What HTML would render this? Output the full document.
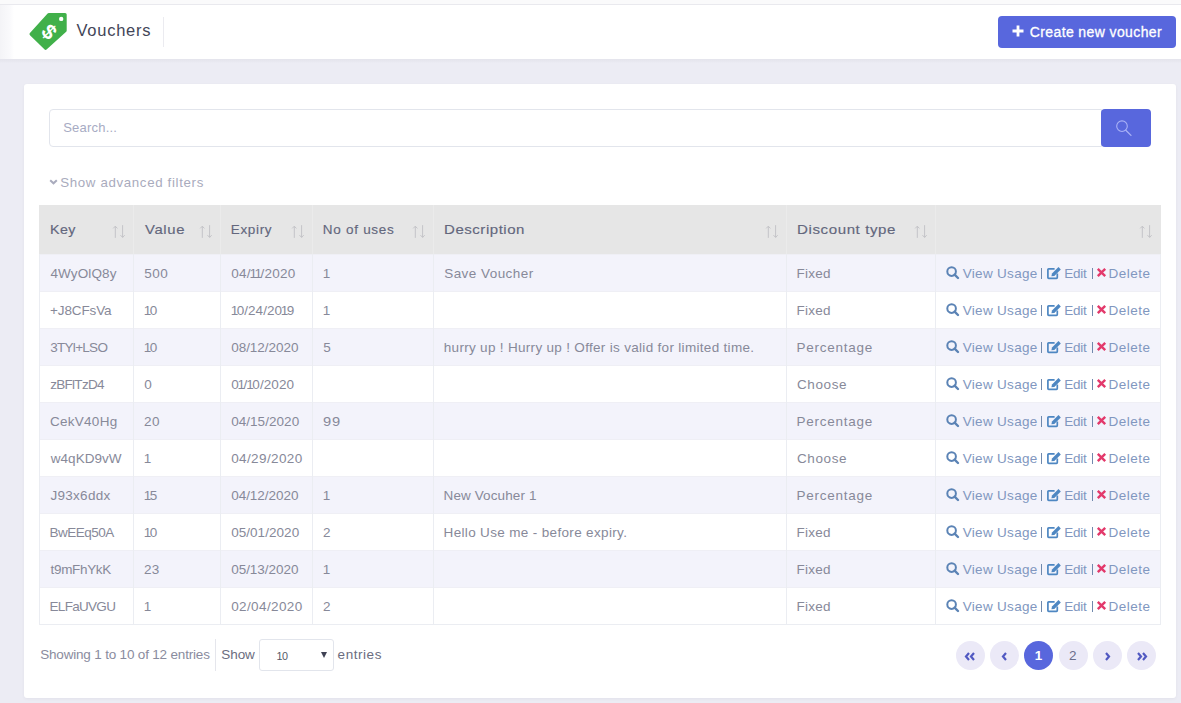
<!DOCTYPE html><html><head><meta charset="utf-8"><style>
*{box-sizing:border-box;margin:0;padding:0}
html,body{width:1181px;height:703px;overflow:hidden}
body{background:#ececf4;font-family:"Liberation Sans",sans-serif;position:relative}
.a{position:absolute}
.t{position:absolute;height:0;line-height:0;white-space:nowrap}
svg{position:absolute;overflow:visible}
</style></head><body>
<div class="a" style="left:0;top:0;width:1181px;height:4px;background:#fafafb"></div>
<div class="a" style="left:0;top:4px;width:1181px;height:1px;background:#e9e9ee"></div>
<div class="a" style="left:0;top:5px;width:1181px;height:54px;background:linear-gradient(90deg,#f4f4f7 0px,#fafafc 10px,#fff 14px)"></div>
<div class="a" style="left:0;top:59px;width:1181px;height:4px;background:linear-gradient(180deg,#e4e4ec 0,#e7e7ef 50%,#ececf4 100%)"></div>
<svg style="left:25px;top:8px" width="48" height="48" viewBox="0 0 48 48">
<polygon points="40.1,6.6 23.8,6.6 6.1,26 20.5,40.2 40.1,22.6" fill="#41b04a" stroke="#41b04a" stroke-width="3.2" stroke-linejoin="round"/>
<circle cx="36.2" cy="10.9" r="2.2" fill="#fff"/>
<text x="0" y="0" transform="translate(24.4,23.6) rotate(45)" font-family="Liberation Sans" font-weight="bold" font-size="21" fill="#fff" text-anchor="middle" dominant-baseline="central">$</text>
</svg>
<div class="t" style="left:76.50px;top:29.98px;font-size:16.5px;color:#434558;font-weight:normal;letter-spacing:0.746px;">Vouchers</div>
<div class="a" style="left:163px;top:17px;width:1px;height:30px;background:#ebebf0"></div>
<div class="a" style="left:998px;top:16px;width:178px;height:32px;background:#5867dd;border-radius:4px"></div>
<svg style="left:1012px;top:25px" width="12" height="12" viewBox="0 0 12 12"><path d="M6 0.5V11.5M0.5 6H11.5" stroke="#fff" stroke-width="2.8"/></svg>
<div class="t" style="left:1029.74px;top:32.05px;font-size:14px;color:#ffffff;font-weight:normal;letter-spacing:0.390px;-webkit-text-stroke:0.3px #fff">Create new voucher</div>
<div class="a" style="left:24px;top:84px;width:1152px;height:614px;background:#fff;border-radius:3px;box-shadow:0 1px 3px rgba(60,60,90,0.06)"></div>
<div class="a" style="left:49px;top:109px;width:1053px;height:38px;border:1px solid #e2e5ec;border-radius:4px 0 0 4px"></div>
<div class="t" style="left:63.19px;top:127.50px;font-size:13px;color:#a7abc3;font-weight:normal;letter-spacing:0.219px;">Search...</div>
<div class="a" style="left:1101px;top:109px;width:50px;height:38px;background:#5867dd;border-radius:4px"></div>
<svg style="left:1100px;top:108px" width="52" height="40" viewBox="1100 108 52 40"><circle cx="1122" cy="126.2" r="5.3" fill="none" stroke="#aab2f6" stroke-width="1.1"/><path d="M1125.8 130.2L1131 135.4" stroke="#aab2f6" stroke-width="1.3" stroke-linecap="round"/></svg>
<svg style="left:49px;top:178.8px" width="9" height="6" viewBox="0 0 9 6"><path d="M1.2 1.2L4.5 4.3L7.8 1.2" fill="none" stroke="#a9abbd" stroke-width="2"/></svg>
<div class="t" style="left:60.18px;top:182.69px;font-size:13.3px;color:#a9abbd;font-weight:normal;letter-spacing:0.651px;">Show advanced filters</div>
<div class="a" style="left:39px;top:205px;width:1122px;height:49px;background:#e6e6e6"></div>
<div class="a" style="left:133px;top:205px;width:1px;height:49px;background:#ebebeb"></div>
<div class="a" style="left:220px;top:205px;width:1px;height:49px;background:#ebebeb"></div>
<div class="a" style="left:312px;top:205px;width:1px;height:49px;background:#ebebeb"></div>
<div class="a" style="left:433px;top:205px;width:1px;height:49px;background:#ebebeb"></div>
<div class="a" style="left:786px;top:205px;width:1px;height:49px;background:#ebebeb"></div>
<div class="a" style="left:935px;top:205px;width:1px;height:49px;background:#ebebeb"></div>
<div class="t" style="left:49.75px;top:230.22px;font-size:13.5px;color:#63677d;font-weight:normal;letter-spacing:0.418px;-webkit-text-stroke:0.15px #63677d;transform:scaleX(1.0565);transform-origin:0 0">Key</div>
<svg style="left:113px;top:223px" width="12" height="17" viewBox="0 0 12 17"><path d="M2.3 3.2V14.9M0.2 5.4L2.3 3.2L4.4 5.4M9.6 2.2V14.4M7.5 12.2L9.6 14.4L11.7 12.2" fill="none" stroke="#c4c4c8" stroke-width="1"/></svg>
<div class="t" style="left:144.80px;top:230.22px;font-size:13.5px;color:#63677d;font-weight:normal;letter-spacing:0.562px;-webkit-text-stroke:0.15px #63677d;transform:scaleX(1.1023);transform-origin:0 0">Value</div>
<svg style="left:200px;top:223px" width="12" height="17" viewBox="0 0 12 17"><path d="M2.3 3.2V14.9M0.2 5.4L2.3 3.2L4.4 5.4M9.6 2.2V14.4M7.5 12.2L9.6 14.4L11.7 12.2" fill="none" stroke="#c4c4c8" stroke-width="1"/></svg>
<div class="t" style="left:230.75px;top:230.22px;font-size:13.5px;color:#63677d;font-weight:normal;letter-spacing:0.669px;-webkit-text-stroke:0.15px #63677d">Expiry</div>
<svg style="left:292px;top:223px" width="12" height="17" viewBox="0 0 12 17"><path d="M2.3 3.2V14.9M0.2 5.4L2.3 3.2L4.4 5.4M9.6 2.2V14.4M7.5 12.2L9.6 14.4L11.7 12.2" fill="none" stroke="#c4c4c8" stroke-width="1"/></svg>
<div class="t" style="left:322.75px;top:230.22px;font-size:13.5px;color:#63677d;font-weight:normal;letter-spacing:0.727px;-webkit-text-stroke:0.15px #63677d">No of uses</div>
<svg style="left:413px;top:223px" width="12" height="17" viewBox="0 0 12 17"><path d="M2.3 3.2V14.9M0.2 5.4L2.3 3.2L4.4 5.4M9.6 2.2V14.4M7.5 12.2L9.6 14.4L11.7 12.2" fill="none" stroke="#c4c4c8" stroke-width="1"/></svg>
<div class="t" style="left:443.75px;top:230.22px;font-size:13.5px;color:#63677d;font-weight:normal;letter-spacing:0.487px;-webkit-text-stroke:0.15px #63677d;transform:scaleX(1.1113);transform-origin:0 0">Description</div>
<svg style="left:766px;top:223px" width="12" height="17" viewBox="0 0 12 17"><path d="M2.3 3.2V14.9M0.2 5.4L2.3 3.2L4.4 5.4M9.6 2.2V14.4M7.5 12.2L9.6 14.4L11.7 12.2" fill="none" stroke="#c4c4c8" stroke-width="1"/></svg>
<div class="t" style="left:796.75px;top:230.22px;font-size:13.5px;color:#63677d;font-weight:normal;letter-spacing:0.524px;-webkit-text-stroke:0.15px #63677d;transform:scaleX(1.1176);transform-origin:0 0">Discount type</div>
<svg style="left:915px;top:223px" width="12" height="17" viewBox="0 0 12 17"><path d="M2.3 3.2V14.9M0.2 5.4L2.3 3.2L4.4 5.4M9.6 2.2V14.4M7.5 12.2L9.6 14.4L11.7 12.2" fill="none" stroke="#c4c4c8" stroke-width="1"/></svg>
<svg style="left:1140px;top:223px" width="12" height="17" viewBox="0 0 12 17"><path d="M2.3 3.2V14.9M0.2 5.4L2.3 3.2L4.4 5.4M9.6 2.2V14.4M7.5 12.2L9.6 14.4L11.7 12.2" fill="none" stroke="#c4c4c8" stroke-width="1"/></svg>
<div class="a" style="left:39px;top:254px;width:1122px;height:37px;background:#f3f3fb;border-top:1px solid #efeff5"></div>
<div class="a" style="left:39px;top:291px;width:1122px;height:37px;background:#ffffff;border-top:1px solid #efeff5"></div>
<div class="a" style="left:39px;top:328px;width:1122px;height:37px;background:#f3f3fb;border-top:1px solid #efeff5"></div>
<div class="a" style="left:39px;top:365px;width:1122px;height:37px;background:#ffffff;border-top:1px solid #efeff5"></div>
<div class="a" style="left:39px;top:402px;width:1122px;height:37px;background:#f3f3fb;border-top:1px solid #efeff5"></div>
<div class="a" style="left:39px;top:439px;width:1122px;height:37px;background:#ffffff;border-top:1px solid #efeff5"></div>
<div class="a" style="left:39px;top:476px;width:1122px;height:37px;background:#f3f3fb;border-top:1px solid #efeff5"></div>
<div class="a" style="left:39px;top:513px;width:1122px;height:37px;background:#ffffff;border-top:1px solid #efeff5"></div>
<div class="a" style="left:39px;top:550px;width:1122px;height:37px;background:#f3f3fb;border-top:1px solid #efeff5"></div>
<div class="a" style="left:39px;top:587px;width:1122px;height:37px;background:#ffffff;border-top:1px solid #efeff5"></div>
<div class="a" style="left:39px;top:254px;width:1px;height:371px;background:#ebedf2"></div>
<div class="a" style="left:133px;top:254px;width:1px;height:371px;background:#ebedf2"></div>
<div class="a" style="left:220px;top:254px;width:1px;height:371px;background:#ebedf2"></div>
<div class="a" style="left:312px;top:254px;width:1px;height:371px;background:#ebedf2"></div>
<div class="a" style="left:433px;top:254px;width:1px;height:371px;background:#ebedf2"></div>
<div class="a" style="left:786px;top:254px;width:1px;height:371px;background:#ebedf2"></div>
<div class="a" style="left:935px;top:254px;width:1px;height:371px;background:#ebedf2"></div>
<div class="a" style="left:1160px;top:254px;width:1px;height:371px;background:#ebedf2"></div>
<div class="a" style="left:39px;top:624px;width:1122px;height:1px;background:#ebedf2"></div>
<div class="t" style="left:50.39px;top:274.22px;font-size:13.5px;color:#878999;font-weight:normal;letter-spacing:0.124px;">4WyOlQ8y</div>
<div class="t" style="left:144.18px;top:274.22px;font-size:13.5px;color:#878999;font-weight:normal;letter-spacing:0.567px;">500</div>
<div class="t" style="left:231.18px;top:274.22px;font-size:13.5px;color:#878999;font-weight:normal;letter-spacing:0.285px;">04/<span style="margin-left:-1.2px;letter-spacing:-1.5px">1</span><span style="margin-left:-1.2px;letter-spacing:-1.5px">1</span>/2020</div>
<div class="t" style="left:322.76px;top:274.22px;font-size:13.5px;color:#878999;font-weight:normal;letter-spacing:0.000px;">1</div>
<div class="t" style="left:444.18px;top:274.22px;font-size:13.5px;color:#878999;font-weight:normal;letter-spacing:0.457px;">Save Voucher</div>
<div class="t" style="left:796.55px;top:274.22px;font-size:13.5px;color:#878999;font-weight:normal;letter-spacing:0.250px;">Fixed</div>
<svg style="left:945.5px;top:266.3px" width="13" height="13" viewBox="0 0 13 13"><circle cx="5.6" cy="5.6" r="4.3" fill="none" stroke="#5b83b5" stroke-width="2"/><path d="M8.6 8.6L12 12" stroke="#5b83b5" stroke-width="2.4" stroke-linecap="round"/></svg>
<div class="t" style="left:962.70px;top:274.22px;font-size:13.5px;color:#8197c0;font-weight:normal;letter-spacing:0.317px;">View Usage</div>
<div class="a" style="left:1041px;top:268px;width:1.2px;height:11px;background:#7089ad"></div>
<svg style="left:1046.5px;top:267.1px" width="14" height="12" viewBox="0 0 14 12"><path d="M7.6 1.9H1.7Q0.9 1.9 0.9 2.7V10.5Q0.9 11.3 1.7 11.3H9.5Q10.3 11.3 10.3 10.5V6.6" fill="none" stroke="#4e87c2" stroke-width="1.7"/><path d="M4.4 9.3L5.0 6.6L11.5 0.1L13.8 2.4L7.3 8.9Z" fill="#4e87c2"/></svg>
<div class="t" style="left:1064.25px;top:274.22px;font-size:13.5px;color:#8197c0;font-weight:normal;letter-spacing:-0.218px;">Edit</div>
<div class="a" style="left:1091.5px;top:268px;width:1.2px;height:11px;background:#7089ad"></div>
<svg style="left:1097px;top:268.2px" width="9" height="9" viewBox="0 0 9 9"><path d="M0.8 0.8L8.2 8.2M8.2 0.8L0.8 8.2" stroke="#e3396b" stroke-width="2.4"/></svg>
<div class="t" style="left:1108.45px;top:274.22px;font-size:13.5px;color:#8197c0;font-weight:normal;letter-spacing:0.516px;">Delete</div>
<div class="t" style="left:49.97px;top:311.22px;font-size:13.5px;color:#878999;font-weight:normal;letter-spacing:-0.107px;">+J8CFsVa</div>
<div class="t" style="left:144.96px;top:311.22px;font-size:13.5px;color:#878999;font-weight:normal;letter-spacing:0.000px;"><span style="margin-left:-1.2px;letter-spacing:-1.5px">1</span>0</div>
<div class="t" style="left:231.96px;top:311.22px;font-size:13.5px;color:#878999;font-weight:normal;letter-spacing:0.018px;"><span style="margin-left:-1.2px;letter-spacing:-1.5px">1</span>0/24/20<span style="margin-left:-1.2px;letter-spacing:-1.5px">1</span>9</div>
<div class="t" style="left:322.76px;top:311.22px;font-size:13.5px;color:#878999;font-weight:normal;letter-spacing:0.000px;">1</div>
<div class="t" style="left:796.55px;top:311.22px;font-size:13.5px;color:#878999;font-weight:normal;letter-spacing:0.250px;">Fixed</div>
<svg style="left:945.5px;top:303.3px" width="13" height="13" viewBox="0 0 13 13"><circle cx="5.6" cy="5.6" r="4.3" fill="none" stroke="#5b83b5" stroke-width="2"/><path d="M8.6 8.6L12 12" stroke="#5b83b5" stroke-width="2.4" stroke-linecap="round"/></svg>
<div class="t" style="left:962.70px;top:311.22px;font-size:13.5px;color:#8197c0;font-weight:normal;letter-spacing:0.317px;">View Usage</div>
<div class="a" style="left:1041px;top:305px;width:1.2px;height:11px;background:#7089ad"></div>
<svg style="left:1046.5px;top:304.1px" width="14" height="12" viewBox="0 0 14 12"><path d="M7.6 1.9H1.7Q0.9 1.9 0.9 2.7V10.5Q0.9 11.3 1.7 11.3H9.5Q10.3 11.3 10.3 10.5V6.6" fill="none" stroke="#4e87c2" stroke-width="1.7"/><path d="M4.4 9.3L5.0 6.6L11.5 0.1L13.8 2.4L7.3 8.9Z" fill="#4e87c2"/></svg>
<div class="t" style="left:1064.25px;top:311.22px;font-size:13.5px;color:#8197c0;font-weight:normal;letter-spacing:-0.218px;">Edit</div>
<div class="a" style="left:1091.5px;top:305px;width:1.2px;height:11px;background:#7089ad"></div>
<svg style="left:1097px;top:305.2px" width="9" height="9" viewBox="0 0 9 9"><path d="M0.8 0.8L8.2 8.2M8.2 0.8L0.8 8.2" stroke="#e3396b" stroke-width="2.4"/></svg>
<div class="t" style="left:1108.45px;top:311.22px;font-size:13.5px;color:#8197c0;font-weight:normal;letter-spacing:0.516px;">Delete</div>
<div class="t" style="left:50.18px;top:348.22px;font-size:13.5px;color:#878999;font-weight:normal;letter-spacing:-0.700px;">3TYl+LSO</div>
<div class="t" style="left:144.96px;top:348.22px;font-size:13.5px;color:#878999;font-weight:normal;letter-spacing:0.000px;"><span style="margin-left:-1.2px;letter-spacing:-1.5px">1</span>0</div>
<div class="t" style="left:231.18px;top:348.22px;font-size:13.5px;color:#878999;font-weight:normal;letter-spacing:-0.023px;">08/12/2020</div>
<div class="t" style="left:323.18px;top:348.22px;font-size:13.5px;color:#878999;font-weight:normal;letter-spacing:0.000px;">5</div>
<div class="t" style="left:443.76px;top:348.22px;font-size:13.5px;color:#878999;font-weight:normal;letter-spacing:0.310px;">hurry up ! Hurry up ! Offer is valid for limited time.</div>
<div class="t" style="left:796.55px;top:348.22px;font-size:13.5px;color:#878999;font-weight:normal;letter-spacing:0.739px;">Percentage</div>
<svg style="left:945.5px;top:340.3px" width="13" height="13" viewBox="0 0 13 13"><circle cx="5.6" cy="5.6" r="4.3" fill="none" stroke="#5b83b5" stroke-width="2"/><path d="M8.6 8.6L12 12" stroke="#5b83b5" stroke-width="2.4" stroke-linecap="round"/></svg>
<div class="t" style="left:962.70px;top:348.22px;font-size:13.5px;color:#8197c0;font-weight:normal;letter-spacing:0.317px;">View Usage</div>
<div class="a" style="left:1041px;top:342px;width:1.2px;height:11px;background:#7089ad"></div>
<svg style="left:1046.5px;top:341.1px" width="14" height="12" viewBox="0 0 14 12"><path d="M7.6 1.9H1.7Q0.9 1.9 0.9 2.7V10.5Q0.9 11.3 1.7 11.3H9.5Q10.3 11.3 10.3 10.5V6.6" fill="none" stroke="#4e87c2" stroke-width="1.7"/><path d="M4.4 9.3L5.0 6.6L11.5 0.1L13.8 2.4L7.3 8.9Z" fill="#4e87c2"/></svg>
<div class="t" style="left:1064.25px;top:348.22px;font-size:13.5px;color:#8197c0;font-weight:normal;letter-spacing:-0.218px;">Edit</div>
<div class="a" style="left:1091.5px;top:342px;width:1.2px;height:11px;background:#7089ad"></div>
<svg style="left:1097px;top:342.2px" width="9" height="9" viewBox="0 0 9 9"><path d="M0.8 0.8L8.2 8.2M8.2 0.8L0.8 8.2" stroke="#e3396b" stroke-width="2.4"/></svg>
<div class="t" style="left:1108.45px;top:348.22px;font-size:13.5px;color:#8197c0;font-weight:normal;letter-spacing:0.516px;">Delete</div>
<div class="t" style="left:50.18px;top:385.22px;font-size:13.5px;color:#878999;font-weight:normal;letter-spacing:-0.700px;">zBFlTzD4</div>
<div class="t" style="left:144.18px;top:385.22px;font-size:13.5px;color:#878999;font-weight:normal;letter-spacing:0.000px;">0</div>
<div class="t" style="left:231.18px;top:385.22px;font-size:13.5px;color:#878999;font-weight:normal;letter-spacing:0.099px;">0<span style="margin-left:-1.2px;letter-spacing:-1.5px">1</span>/<span style="margin-left:-1.2px;letter-spacing:-1.5px">1</span>0/2020</div>
<div class="t" style="left:796.97px;top:385.22px;font-size:13.5px;color:#878999;font-weight:normal;letter-spacing:0.610px;">Choose</div>
<svg style="left:945.5px;top:377.3px" width="13" height="13" viewBox="0 0 13 13"><circle cx="5.6" cy="5.6" r="4.3" fill="none" stroke="#5b83b5" stroke-width="2"/><path d="M8.6 8.6L12 12" stroke="#5b83b5" stroke-width="2.4" stroke-linecap="round"/></svg>
<div class="t" style="left:962.70px;top:385.22px;font-size:13.5px;color:#8197c0;font-weight:normal;letter-spacing:0.317px;">View Usage</div>
<div class="a" style="left:1041px;top:379px;width:1.2px;height:11px;background:#7089ad"></div>
<svg style="left:1046.5px;top:378.1px" width="14" height="12" viewBox="0 0 14 12"><path d="M7.6 1.9H1.7Q0.9 1.9 0.9 2.7V10.5Q0.9 11.3 1.7 11.3H9.5Q10.3 11.3 10.3 10.5V6.6" fill="none" stroke="#4e87c2" stroke-width="1.7"/><path d="M4.4 9.3L5.0 6.6L11.5 0.1L13.8 2.4L7.3 8.9Z" fill="#4e87c2"/></svg>
<div class="t" style="left:1064.25px;top:385.22px;font-size:13.5px;color:#8197c0;font-weight:normal;letter-spacing:-0.218px;">Edit</div>
<div class="a" style="left:1091.5px;top:379px;width:1.2px;height:11px;background:#7089ad"></div>
<svg style="left:1097px;top:379.2px" width="9" height="9" viewBox="0 0 9 9"><path d="M0.8 0.8L8.2 8.2M8.2 0.8L0.8 8.2" stroke="#e3396b" stroke-width="2.4"/></svg>
<div class="t" style="left:1108.45px;top:385.22px;font-size:13.5px;color:#8197c0;font-weight:normal;letter-spacing:0.516px;">Delete</div>
<div class="t" style="left:49.97px;top:422.22px;font-size:13.5px;color:#878999;font-weight:normal;letter-spacing:0.272px;">CekV40Hg</div>
<div class="t" style="left:143.97px;top:422.22px;font-size:13.5px;color:#878999;font-weight:normal;letter-spacing:0.453px;">20</div>
<div class="t" style="left:231.18px;top:422.22px;font-size:13.5px;color:#878999;font-weight:normal;letter-spacing:0.044px;">04/15/2020</div>
<div class="t" style="left:322.97px;top:422.22px;font-size:13.5px;color:#878999;font-weight:normal;letter-spacing:0.786px;;transform:scaleX(1.0852);transform-origin:0 0">99</div>
<div class="t" style="left:796.55px;top:422.22px;font-size:13.5px;color:#878999;font-weight:normal;letter-spacing:0.739px;">Percentage</div>
<svg style="left:945.5px;top:414.3px" width="13" height="13" viewBox="0 0 13 13"><circle cx="5.6" cy="5.6" r="4.3" fill="none" stroke="#5b83b5" stroke-width="2"/><path d="M8.6 8.6L12 12" stroke="#5b83b5" stroke-width="2.4" stroke-linecap="round"/></svg>
<div class="t" style="left:962.70px;top:422.22px;font-size:13.5px;color:#8197c0;font-weight:normal;letter-spacing:0.317px;">View Usage</div>
<div class="a" style="left:1041px;top:416px;width:1.2px;height:11px;background:#7089ad"></div>
<svg style="left:1046.5px;top:415.1px" width="14" height="12" viewBox="0 0 14 12"><path d="M7.6 1.9H1.7Q0.9 1.9 0.9 2.7V10.5Q0.9 11.3 1.7 11.3H9.5Q10.3 11.3 10.3 10.5V6.6" fill="none" stroke="#4e87c2" stroke-width="1.7"/><path d="M4.4 9.3L5.0 6.6L11.5 0.1L13.8 2.4L7.3 8.9Z" fill="#4e87c2"/></svg>
<div class="t" style="left:1064.25px;top:422.22px;font-size:13.5px;color:#8197c0;font-weight:normal;letter-spacing:-0.218px;">Edit</div>
<div class="a" style="left:1091.5px;top:416px;width:1.2px;height:11px;background:#7089ad"></div>
<svg style="left:1097px;top:416.2px" width="9" height="9" viewBox="0 0 9 9"><path d="M0.8 0.8L8.2 8.2M8.2 0.8L0.8 8.2" stroke="#e3396b" stroke-width="2.4"/></svg>
<div class="t" style="left:1108.45px;top:422.22px;font-size:13.5px;color:#8197c0;font-weight:normal;letter-spacing:0.516px;">Delete</div>
<div class="t" style="left:50.81px;top:459.22px;font-size:13.5px;color:#878999;font-weight:normal;letter-spacing:0.021px;">w4qKD9vW</div>
<div class="t" style="left:143.76px;top:459.22px;font-size:13.5px;color:#878999;font-weight:normal;letter-spacing:0.000px;">1</div>
<div class="t" style="left:231.18px;top:459.22px;font-size:13.5px;color:#878999;font-weight:normal;letter-spacing:0.388px;">04/29/2020</div>
<div class="t" style="left:796.97px;top:459.22px;font-size:13.5px;color:#878999;font-weight:normal;letter-spacing:0.610px;">Choose</div>
<svg style="left:945.5px;top:451.3px" width="13" height="13" viewBox="0 0 13 13"><circle cx="5.6" cy="5.6" r="4.3" fill="none" stroke="#5b83b5" stroke-width="2"/><path d="M8.6 8.6L12 12" stroke="#5b83b5" stroke-width="2.4" stroke-linecap="round"/></svg>
<div class="t" style="left:962.70px;top:459.22px;font-size:13.5px;color:#8197c0;font-weight:normal;letter-spacing:0.317px;">View Usage</div>
<div class="a" style="left:1041px;top:453px;width:1.2px;height:11px;background:#7089ad"></div>
<svg style="left:1046.5px;top:452.1px" width="14" height="12" viewBox="0 0 14 12"><path d="M7.6 1.9H1.7Q0.9 1.9 0.9 2.7V10.5Q0.9 11.3 1.7 11.3H9.5Q10.3 11.3 10.3 10.5V6.6" fill="none" stroke="#4e87c2" stroke-width="1.7"/><path d="M4.4 9.3L5.0 6.6L11.5 0.1L13.8 2.4L7.3 8.9Z" fill="#4e87c2"/></svg>
<div class="t" style="left:1064.25px;top:459.22px;font-size:13.5px;color:#8197c0;font-weight:normal;letter-spacing:-0.218px;">Edit</div>
<div class="a" style="left:1091.5px;top:453px;width:1.2px;height:11px;background:#7089ad"></div>
<svg style="left:1097px;top:453.2px" width="9" height="9" viewBox="0 0 9 9"><path d="M0.8 0.8L8.2 8.2M8.2 0.8L0.8 8.2" stroke="#e3396b" stroke-width="2.4"/></svg>
<div class="t" style="left:1108.45px;top:459.22px;font-size:13.5px;color:#8197c0;font-weight:normal;letter-spacing:0.516px;">Delete</div>
<div class="t" style="left:50.39px;top:496.22px;font-size:13.5px;color:#878999;font-weight:normal;letter-spacing:0.303px;">J93x6ddx</div>
<div class="t" style="left:144.96px;top:496.22px;font-size:13.5px;color:#878999;font-weight:normal;letter-spacing:0.000px;"><span style="margin-left:-1.2px;letter-spacing:-1.5px">1</span>5</div>
<div class="t" style="left:231.18px;top:496.22px;font-size:13.5px;color:#878999;font-weight:normal;letter-spacing:-0.023px;">04/12/2020</div>
<div class="t" style="left:322.76px;top:496.22px;font-size:13.5px;color:#878999;font-weight:normal;letter-spacing:0.000px;">1</div>
<div class="t" style="left:443.55px;top:496.22px;font-size:13.5px;color:#878999;font-weight:normal;letter-spacing:0.112px;">New Vocuher 1</div>
<div class="t" style="left:796.55px;top:496.22px;font-size:13.5px;color:#878999;font-weight:normal;letter-spacing:0.739px;">Percentage</div>
<svg style="left:945.5px;top:488.3px" width="13" height="13" viewBox="0 0 13 13"><circle cx="5.6" cy="5.6" r="4.3" fill="none" stroke="#5b83b5" stroke-width="2"/><path d="M8.6 8.6L12 12" stroke="#5b83b5" stroke-width="2.4" stroke-linecap="round"/></svg>
<div class="t" style="left:962.70px;top:496.22px;font-size:13.5px;color:#8197c0;font-weight:normal;letter-spacing:0.317px;">View Usage</div>
<div class="a" style="left:1041px;top:490px;width:1.2px;height:11px;background:#7089ad"></div>
<svg style="left:1046.5px;top:489.1px" width="14" height="12" viewBox="0 0 14 12"><path d="M7.6 1.9H1.7Q0.9 1.9 0.9 2.7V10.5Q0.9 11.3 1.7 11.3H9.5Q10.3 11.3 10.3 10.5V6.6" fill="none" stroke="#4e87c2" stroke-width="1.7"/><path d="M4.4 9.3L5.0 6.6L11.5 0.1L13.8 2.4L7.3 8.9Z" fill="#4e87c2"/></svg>
<div class="t" style="left:1064.25px;top:496.22px;font-size:13.5px;color:#8197c0;font-weight:normal;letter-spacing:-0.218px;">Edit</div>
<div class="a" style="left:1091.5px;top:490px;width:1.2px;height:11px;background:#7089ad"></div>
<svg style="left:1097px;top:490.2px" width="9" height="9" viewBox="0 0 9 9"><path d="M0.8 0.8L8.2 8.2M8.2 0.8L0.8 8.2" stroke="#e3396b" stroke-width="2.4"/></svg>
<div class="t" style="left:1108.45px;top:496.22px;font-size:13.5px;color:#8197c0;font-weight:normal;letter-spacing:0.516px;">Delete</div>
<div class="t" style="left:49.55px;top:533.22px;font-size:13.5px;color:#878999;font-weight:normal;letter-spacing:-0.515px;">BwEEq50A</div>
<div class="t" style="left:144.96px;top:533.22px;font-size:13.5px;color:#878999;font-weight:normal;letter-spacing:0.000px;"><span style="margin-left:-1.2px;letter-spacing:-1.5px">1</span>0</div>
<div class="t" style="left:231.18px;top:533.22px;font-size:13.5px;color:#878999;font-weight:normal;letter-spacing:0.044px;">05/01/2020</div>
<div class="t" style="left:322.97px;top:533.22px;font-size:13.5px;color:#878999;font-weight:normal;letter-spacing:0.000px;">2</div>
<div class="t" style="left:443.55px;top:533.22px;font-size:13.5px;color:#878999;font-weight:normal;letter-spacing:0.341px;">Hello Use me - before expiry.</div>
<div class="t" style="left:796.55px;top:533.22px;font-size:13.5px;color:#878999;font-weight:normal;letter-spacing:0.250px;">Fixed</div>
<svg style="left:945.5px;top:525.3px" width="13" height="13" viewBox="0 0 13 13"><circle cx="5.6" cy="5.6" r="4.3" fill="none" stroke="#5b83b5" stroke-width="2"/><path d="M8.6 8.6L12 12" stroke="#5b83b5" stroke-width="2.4" stroke-linecap="round"/></svg>
<div class="t" style="left:962.70px;top:533.22px;font-size:13.5px;color:#8197c0;font-weight:normal;letter-spacing:0.317px;">View Usage</div>
<div class="a" style="left:1041px;top:527px;width:1.2px;height:11px;background:#7089ad"></div>
<svg style="left:1046.5px;top:526.1px" width="14" height="12" viewBox="0 0 14 12"><path d="M7.6 1.9H1.7Q0.9 1.9 0.9 2.7V10.5Q0.9 11.3 1.7 11.3H9.5Q10.3 11.3 10.3 10.5V6.6" fill="none" stroke="#4e87c2" stroke-width="1.7"/><path d="M4.4 9.3L5.0 6.6L11.5 0.1L13.8 2.4L7.3 8.9Z" fill="#4e87c2"/></svg>
<div class="t" style="left:1064.25px;top:533.22px;font-size:13.5px;color:#8197c0;font-weight:normal;letter-spacing:-0.218px;">Edit</div>
<div class="a" style="left:1091.5px;top:527px;width:1.2px;height:11px;background:#7089ad"></div>
<svg style="left:1097px;top:527.2px" width="9" height="9" viewBox="0 0 9 9"><path d="M0.8 0.8L8.2 8.2M8.2 0.8L0.8 8.2" stroke="#e3396b" stroke-width="2.4"/></svg>
<div class="t" style="left:1108.45px;top:533.22px;font-size:13.5px;color:#8197c0;font-weight:normal;letter-spacing:0.516px;">Delete</div>
<div class="t" style="left:50.60px;top:570.22px;font-size:13.5px;color:#878999;font-weight:normal;letter-spacing:-0.339px;">t9mFhYkK</div>
<div class="t" style="left:143.97px;top:570.22px;font-size:13.5px;color:#878999;font-weight:normal;letter-spacing:0.164px;">23</div>
<div class="t" style="left:231.18px;top:570.22px;font-size:13.5px;color:#878999;font-weight:normal;letter-spacing:-0.023px;">05/13/2020</div>
<div class="t" style="left:322.76px;top:570.22px;font-size:13.5px;color:#878999;font-weight:normal;letter-spacing:0.000px;">1</div>
<div class="t" style="left:796.55px;top:570.22px;font-size:13.5px;color:#878999;font-weight:normal;letter-spacing:0.250px;">Fixed</div>
<svg style="left:945.5px;top:562.3px" width="13" height="13" viewBox="0 0 13 13"><circle cx="5.6" cy="5.6" r="4.3" fill="none" stroke="#5b83b5" stroke-width="2"/><path d="M8.6 8.6L12 12" stroke="#5b83b5" stroke-width="2.4" stroke-linecap="round"/></svg>
<div class="t" style="left:962.70px;top:570.22px;font-size:13.5px;color:#8197c0;font-weight:normal;letter-spacing:0.317px;">View Usage</div>
<div class="a" style="left:1041px;top:564px;width:1.2px;height:11px;background:#7089ad"></div>
<svg style="left:1046.5px;top:563.1px" width="14" height="12" viewBox="0 0 14 12"><path d="M7.6 1.9H1.7Q0.9 1.9 0.9 2.7V10.5Q0.9 11.3 1.7 11.3H9.5Q10.3 11.3 10.3 10.5V6.6" fill="none" stroke="#4e87c2" stroke-width="1.7"/><path d="M4.4 9.3L5.0 6.6L11.5 0.1L13.8 2.4L7.3 8.9Z" fill="#4e87c2"/></svg>
<div class="t" style="left:1064.25px;top:570.22px;font-size:13.5px;color:#8197c0;font-weight:normal;letter-spacing:-0.218px;">Edit</div>
<div class="a" style="left:1091.5px;top:564px;width:1.2px;height:11px;background:#7089ad"></div>
<svg style="left:1097px;top:564.2px" width="9" height="9" viewBox="0 0 9 9"><path d="M0.8 0.8L8.2 8.2M8.2 0.8L0.8 8.2" stroke="#e3396b" stroke-width="2.4"/></svg>
<div class="t" style="left:1108.45px;top:570.22px;font-size:13.5px;color:#8197c0;font-weight:normal;letter-spacing:0.516px;">Delete</div>
<div class="t" style="left:49.55px;top:607.22px;font-size:13.5px;color:#878999;font-weight:normal;letter-spacing:-0.700px;">ELFaUVGU</div>
<div class="t" style="left:143.76px;top:607.22px;font-size:13.5px;color:#878999;font-weight:normal;letter-spacing:0.000px;">1</div>
<div class="t" style="left:231.18px;top:607.22px;font-size:13.5px;color:#878999;font-weight:normal;letter-spacing:0.388px;">02/04/2020</div>
<div class="t" style="left:322.97px;top:607.22px;font-size:13.5px;color:#878999;font-weight:normal;letter-spacing:0.000px;">2</div>
<div class="t" style="left:796.55px;top:607.22px;font-size:13.5px;color:#878999;font-weight:normal;letter-spacing:0.250px;">Fixed</div>
<svg style="left:945.5px;top:599.3px" width="13" height="13" viewBox="0 0 13 13"><circle cx="5.6" cy="5.6" r="4.3" fill="none" stroke="#5b83b5" stroke-width="2"/><path d="M8.6 8.6L12 12" stroke="#5b83b5" stroke-width="2.4" stroke-linecap="round"/></svg>
<div class="t" style="left:962.70px;top:607.22px;font-size:13.5px;color:#8197c0;font-weight:normal;letter-spacing:0.317px;">View Usage</div>
<div class="a" style="left:1041px;top:601px;width:1.2px;height:11px;background:#7089ad"></div>
<svg style="left:1046.5px;top:600.1px" width="14" height="12" viewBox="0 0 14 12"><path d="M7.6 1.9H1.7Q0.9 1.9 0.9 2.7V10.5Q0.9 11.3 1.7 11.3H9.5Q10.3 11.3 10.3 10.5V6.6" fill="none" stroke="#4e87c2" stroke-width="1.7"/><path d="M4.4 9.3L5.0 6.6L11.5 0.1L13.8 2.4L7.3 8.9Z" fill="#4e87c2"/></svg>
<div class="t" style="left:1064.25px;top:607.22px;font-size:13.5px;color:#8197c0;font-weight:normal;letter-spacing:-0.218px;">Edit</div>
<div class="a" style="left:1091.5px;top:601px;width:1.2px;height:11px;background:#7089ad"></div>
<svg style="left:1097px;top:601.2px" width="9" height="9" viewBox="0 0 9 9"><path d="M0.8 0.8L8.2 8.2M8.2 0.8L0.8 8.2" stroke="#e3396b" stroke-width="2.4"/></svg>
<div class="t" style="left:1108.45px;top:607.22px;font-size:13.5px;color:#8197c0;font-weight:normal;letter-spacing:0.516px;">Delete</div>
<div class="t" style="left:40.18px;top:655.32px;font-size:13.5px;color:#8a8c9e;font-weight:normal;letter-spacing:-0.183px;">Showing 1 to 10 of 12 entries</div>
<div class="a" style="left:215px;top:639px;width:1px;height:32px;background:#e5e6ec"></div>
<div class="t" style="left:221.28px;top:655.32px;font-size:13.5px;color:#6b6d80;font-weight:normal;letter-spacing:-0.071px;">Show</div>
<div class="a" style="left:259px;top:639px;width:75px;height:32px;border:1px solid #e2e5ec;border-radius:3px;background:#fff"></div>
<div class="t" style="left:276.60px;top:656.16px;font-size:10.8px;color:#555868;font-weight:normal;letter-spacing:-0.500px;">10</div>
<svg style="left:321px;top:652px" width="6" height="6" viewBox="0 0 6 6"><path d="M0 0H6L3 6Z" fill="#3f4254"/></svg>
<div class="t" style="left:337.58px;top:655.32px;font-size:13.5px;color:#6b6d80;font-weight:normal;letter-spacing:0.554px;">entries</div>
<div class="a" style="left:956.0px;top:641px;width:29px;height:29px;border-radius:50%;background:#ebe9f7"></div>
<div class="a" style="left:990.0px;top:641px;width:29px;height:29px;border-radius:50%;background:#ebe9f7"></div>
<div class="a" style="left:1024.0px;top:641px;width:29px;height:29px;border-radius:50%;background:#5867dd"></div>
<div class="a" style="left:1058.5px;top:641px;width:29px;height:29px;border-radius:50%;background:#ebe9f7"></div>
<div class="a" style="left:1093.0px;top:641px;width:29px;height:29px;border-radius:50%;background:#ebe9f7"></div>
<div class="a" style="left:1126.8px;top:641px;width:29px;height:29px;border-radius:50%;background:#ebe9f7"></div>
<svg style="left:964px;top:652px" width="12" height="9" viewBox="0 0 12 9"><path d="M5 1L2 4.5L5 8M10 1L7 4.5L10 8" fill="none" stroke="#5159c2" stroke-width="2.2"/></svg>
<svg style="left:1001px;top:652px" width="7" height="9" viewBox="0 0 7 9"><path d="M5 1L2 4.5L5 8" fill="none" stroke="#5159c2" stroke-width="2.2"/></svg>
<div class="t" style="left:1034.80px;top:656.12px;font-size:13.5px;color:#ffffff;font-weight:bold;letter-spacing:0.000px;">1</div>
<div class="t" style="left:1069.00px;top:656.12px;font-size:13.5px;color:#6b6e8c;font-weight:normal;letter-spacing:0.000px;">2</div>
<svg style="left:1104px;top:652px" width="7" height="9" viewBox="0 0 7 9"><path d="M2 1L5 4.5L2 8" fill="none" stroke="#5159c2" stroke-width="2.2"/></svg>
<svg style="left:1136px;top:652px" width="12" height="9" viewBox="0 0 12 9"><path d="M2 1L5 4.5L2 8M7 1L10 4.5L7 8" fill="none" stroke="#5159c2" stroke-width="2.2"/></svg>
</body></html>
